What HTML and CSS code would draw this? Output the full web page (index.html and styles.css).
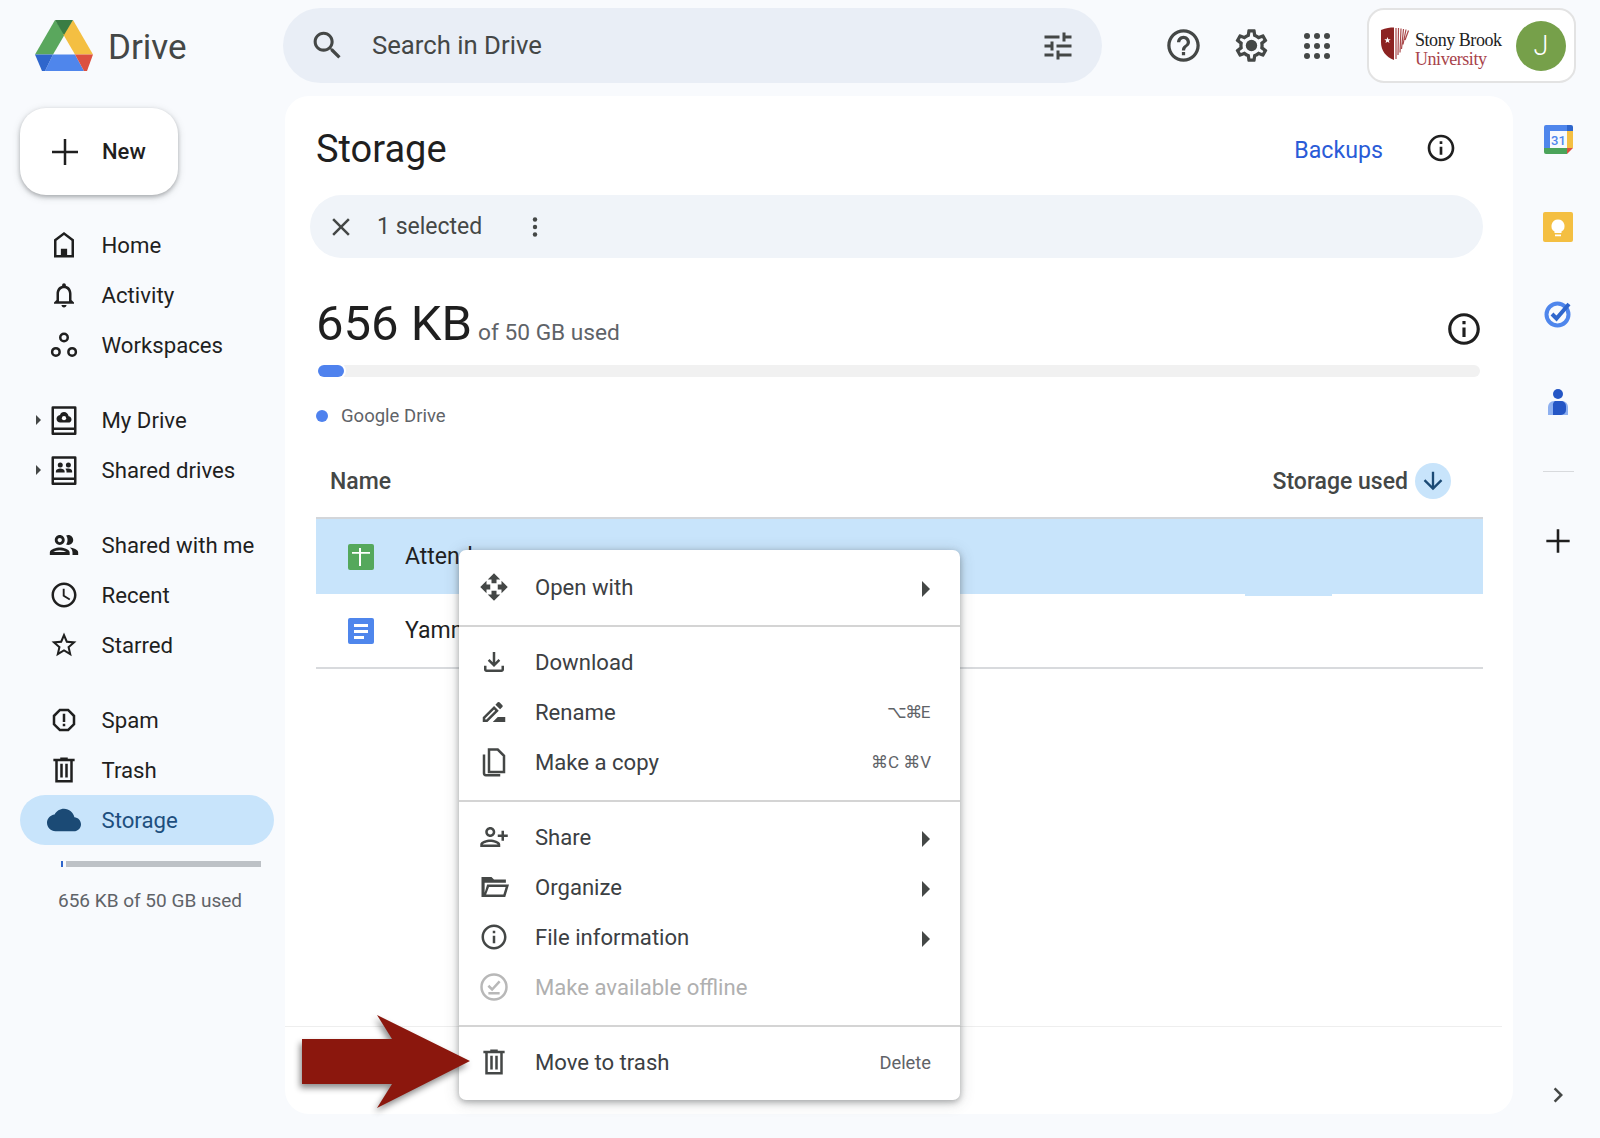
FILE: index.html
```html
<!DOCTYPE html>
<html lang="en">
<head>
  <meta charset="UTF-8" />
  <title>Storage - Google Drive</title>
  <link rel="stylesheet" href="styles.css">
</head>
<body>

  <!-- HEADER -->
  <header class="topbar">
    <div class="brand">
      <svg class="brand-logo" viewBox="0 0 60 54">
        <path fill="#5aa75d" d="M20 1 0 35.500h18L30 15z"/>
        <path fill="#f4bf42" d="M38 1 58 35.500H40L28 15z"/>
        <path fill="#3a7d44" d="M20 1h18L29 16z"/>
        <path fill="#4f86ec" d="M18 35.500h22l9 16.500H10z"/>
        <path fill="#2f66cc" d="M0 35.500h18L10 52H7z"/>
        <path fill="#dc5040" d="M40 35.500h18l-6 16.500h-3z"/>
      </svg>
      <span class="brand-name">Drive</span>
    </div>
    <div class="search">
      <svg class="icon search-icon" viewBox="0 0 24 24"><path d="M15.500 14h-.79l-.28-.27C15.410 12.590 16 11.110 16 9.500 16 5.910 13.090 3 9.500 3S3 5.910 3 9.500 5.910 16 9.500 16c1.610 0 3.090-.59 4.230-1.570l.27.28v.79l5 4.990L20.490 19l-4.990-5zm-6 0C7.010 14 5 11.990 5 9.500S7.010 5 9.500 5 14 7.010 14 9.500 11.990 14 9.500 14z"/></svg>
      <span class="search-text">Search in Drive</span>
      <svg class="icon tune-icon" viewBox="0 0 24 24"><path d="M3 17v2h6v-2H3zM3 5v2h10V5H3zm10 16v-2h8v-2h-8v-2h-2v6h2zM7 9v2H3v2h4v2h2V9H7zm14 4v-2H11v2h10zm-6-4h2V7h4V5h-4V3h-2v6z"/></svg>
    </div>
    <div class="top-actions">
      <svg class="icon help-icon" viewBox="0 0 24 24"><path d="M11 18h2v-2h-2v2zm1-16C6.480 2 2 6.480 2 12s4.480 10 10 10 10-4.480 10-10S17.520 2 12 2zm0 18c-4.410 0-8-3.590-8-8s3.590-8 8-8 8 3.590 8 8-3.590 8-8 8zm0-14c-2.210 0-4 1.790-4 4h2c0-1.100.9-2 2-2s2 .9 2 2c0 2-3 1.750-3 5h2c0-2.250 3-2.500 3-5 0-2.210-1.790-4-4-4z"/></svg>
      <svg class="icon gear-icon" viewBox="0 0 24 24"><path d="M19.430 12.980c.04-.32.07-.64.07-.98 0-.34-.03-.66-.07-.98l2.110-1.650c.19-.15.24-.42.12-.64l-2-3.460c-.09-.16-.26-.25-.44-.25-.06 0-.12.01-.17.03l-2.490 1c-.52-.4-1.080-.73-1.690-.98l-.38-2.650C14.460 2.180 14.250 2 14 2h-4c-.25 0-.46.18-.49.42l-.38 2.650c-.61.25-1.170.59-1.690.98l-2.490-1c-.06-.02-.12-.03-.18-.03-.17 0-.34.09-.43.25l-2 3.460c-.13.22-.07.49.12.64l2.110 1.650c-.04.32-.07.65-.07.98 0 .33.03.66.07.98l-2.110 1.650c-.19.15-.24.42-.12.64l2 3.460c.09.16.26.25.44.25.06 0 .12-.01.17-.03l2.490-1c.52.4 1.080.73 1.690.98l.38 2.650c.03.24.24.42.49.42h4c.25 0 .46-.18.49-.42l.38-2.650c.61-.25 1.170-.59 1.690-.98l2.490 1c.06.02.12.03.18.03.17 0 .34-.09.43-.25l2-3.460c.12-.22.07-.49-.12-.64l-2.110-1.650zm-1.980-1.710c.04.31.05.52.05.73 0 .21-.02.43-.05.73l-.14 1.130.89.7 1.080.84-.7 1.210-1.270-.51-1.040-.42-.9.68c-.43.32-.84.56-1.250.73l-1.060.43-.16 1.130-.2 1.350h-1.400l-.19-1.350-.16-1.130-1.060-.43c-.43-.18-.83-.41-1.230-.71l-.91-.7-1.060.43-1.270.51-.7-1.210 1.080-.84.89-.7-.14-1.130c-.03-.31-.05-.54-.05-.74s.02-.43.05-.73l.14-1.130-.89-.7-1.080-.84.7-1.210 1.270.51 1.040.42.9-.68c.43-.32.84-.56 1.250-.73l1.060-.43.16-1.130.2-1.350h1.390l.19 1.350.16 1.130 1.060.43c.43.18.83.41 1.230.71l.91.7 1.060-.43 1.270-.51.7 1.210-1.070.85-.89.7.14 1.130z"/><circle cx="12" cy="12" r="3.500"/></svg>
      <svg class="apps-icon" viewBox="0 0 26 26">
        <circle cx="3" cy="3" r="3"/><circle cx="13" cy="3" r="3"/><circle cx="23" cy="3" r="3"/>
        <circle cx="3" cy="13" r="3"/><circle cx="13" cy="13" r="3"/><circle cx="23" cy="13" r="3"/>
        <circle cx="3" cy="23" r="3"/><circle cx="13" cy="23" r="3"/><circle cx="23" cy="23" r="3"/>
      </svg>
    </div>
    <div class="account">
      <svg class="shield" viewBox="0 0 28 33">
        <path fill="#8c2322" d="M0 3C5 1 9 .5 13 .5V33C5 30 0 24 0 15z"/>
        <path fill="#fff" d="m6.500 10 .8 2.300h2.400l-1.900 1.500.7 2.300-2-1.400-2 1.400.7-2.300-1.900-1.500h2.400z"/>
        <path fill="none" stroke="#a9484a" stroke-width="1.200" d="M15 1v31M17.500 1 17 28M20 1.500l-1 24M22.500 2l-2 20M25 2.500l-3 15M27.500 3.500 24 13"/>
      </svg>
      <div class="school">
        <span class="school-top">Stony Brook</span>
        <span class="school-bottom">University</span>
      </div>
      <div class="avatar">J</div>
    </div>
  </header>

  <div class="layout">

    <!-- SIDEBAR -->
    <aside class="sidebar">
      <button class="new-btn">
        <svg class="new-plus" viewBox="0 0 28 28"><path d="M12.750 1h2.500v11.750H27v2.500H15.250V27h-2.500V15.250H1v-2.500h11.750z"/></svg>
        New
      </button>

      <nav class="nav-group">
        <a class="nav-row"><svg class="nav-icon" viewBox="0 0 24 24"><path d="M12 1.500 4 7.500V22h16V7.500zM18 20h-3.500v-5h-5v5H6V8.500l6-4.500 6 4.500z"/></svg>Home</a>
        <a class="nav-row"><svg class="nav-icon" viewBox="0 0 24 24"><path d="M12 22c1.100 0 2-.9 2-2h-4c0 1.100.9 2 2 2zm6-6v-5c0-3.070-1.630-5.640-4.500-6.320V4c0-.83-.67-1.500-1.500-1.500s-1.500.67-1.500 1.500v.68C7.640 5.360 6 7.920 6 11v5l-2 2v1h16v-1l-2-2zm-2 1H8v-6c0-2.480 1.510-4.500 4-4.500s4 2.020 4 4.500v6z"/></svg>Activity</a>
        <a class="nav-row"><svg class="nav-icon" viewBox="0 0 24 24"><g fill="none" stroke="#1f1f1f" stroke-width="2"><circle cx="12" cy="6" r="3"/><circle cx="5.500" cy="17.500" r="3"/><circle cx="18.500" cy="17.500" r="3"/></g></svg>Workspaces</a>
      </nav>

      <nav class="nav-group">
        <a class="nav-row has-caret"><svg class="nav-icon" viewBox="0 0 24 24"><path d="M3 1h18a1 1 0 0 1 1 1v21a1 1 0 0 1-1 1H3a1 1 0 0 1-1-1V2a1 1 0 0 1 1-1zm1 2v15h16V3zm0 17v2h16v-2z"/><path d="M12 5.500c-1.600 0-2.800 1-3.200 2.400C7.200 8.100 6 9.500 6 11c0 1.700 1.300 3 3 3h6.500c1.400 0 2.500-1.100 2.500-2.500 0-1.300-1-2.400-2.300-2.500-.4-2.100-1.800-3.500-3.700-3.500z"/><circle cx="12" cy="10.500" r="1.700" fill="#fff"/></svg>My Drive</a>
        <a class="nav-row has-caret"><svg class="nav-icon" viewBox="0 0 24 24"><path d="M3 1h18a1 1 0 0 1 1 1v21a1 1 0 0 1-1 1H3a1 1 0 0 1-1-1V2a1 1 0 0 1 1-1zm1 2v15h16V3zm0 17v2h16v-2z"/><circle cx="9" cy="8" r="2"/><circle cx="15.500" cy="8" r="2"/><path d="M5.500 14v-1c0-1.500 2-2.200 3.500-2.200s3.500.7 3.500 2.200v1zM14 14v-1c0-.9-.3-1.600-.9-2.100.7-.1 1.700-.1 2.400-.1 1.500 0 3 .7 3 2.200v1z"/></svg>Shared drives</a>
      </nav>

      <nav class="nav-group">
        <a class="nav-row"><svg class="nav-icon nav-icon-wide" viewBox="0 0 24 24"><path d="M9 13.750c-2.340 0-7 1.170-7 3.500V19h14v-1.750c0-2.330-4.660-3.500-7-3.500zM4.340 17c.84-.58 2.870-1.250 4.660-1.250s3.820.67 4.660 1.250H4.340zM9 12c1.930 0 3.500-1.570 3.500-3.500S10.930 5 9 5 5.500 6.570 5.500 8.500 7.070 12 9 12zm0-5c.83 0 1.500.67 1.500 1.500S9.830 10 9 10s-1.500-.67-1.500-1.500S8.170 7 9 7zm7.040 6.810c1.160.84 1.960 1.960 1.960 3.440V19h4v-1.750c0-2.020-3.500-3.170-5.960-3.440zM15 12c1.930 0 3.500-1.570 3.500-3.500S16.930 5 15 5c-.54 0-1.040.13-1.500.35.63.89 1 1.980 1 3.150s-.37 2.260-1 3.150c.46.22.96.35 1.500.35z"/></svg>Shared with me</a>
        <a class="nav-row"><svg class="nav-icon" viewBox="0 0 24 24"><path d="M11.990 2C6.470 2 2 6.480 2 12s4.470 10 9.990 10C17.520 22 22 17.520 22 12S17.520 2 11.990 2zM12 20c-4.420 0-8-3.580-8-8s3.580-8 8-8 8 3.580 8 8-3.580 8-8 8zm.5-13H11v6l5.250 3.150.75-1.230-4.500-2.670z"/></svg>Recent</a>
        <a class="nav-row"><svg class="nav-icon" viewBox="0 0 24 24"><path d="M22 9.240l-7.190-.62L12 2 9.190 8.630 2 9.240l5.460 4.730L5.820 21 12 17.270 18.180 21l-1.630-7.030L22 9.240zM12 15.400l-3.760 2.270 1-4.280-3.320-2.880 4.380-.38L12 6.100l1.710 4.040 4.380.38-3.320 2.880 1 4.280L12 15.400z"/></svg>Starred</a>
      </nav>

      <nav class="nav-group">
        <a class="nav-row"><svg class="nav-icon" viewBox="0 0 24 24"><path d="M15.730 3H8.270L3 8.270v7.460L8.270 21h7.460L21 15.730V8.270L15.730 3zM19 14.900 14.900 19H9.100L5 14.900V9.100L9.100 5h5.800L19 9.100v5.800zM11 7h2v6.500h-2zM11 15h2v2h-2z"/></svg>Spam</a>
        <a class="nav-row"><svg class="nav-icon" viewBox="0 0 24 24"><path d="M15 3V2H9v1H3.500v2H5v17h14V5h1.500V3zM17 20H7V5h10zM9 7h2v11H9zM13 7h2v11h-2z"/></svg>Trash</a>
        <a class="nav-row nav-row-active"><svg class="nav-icon nav-icon-wide" viewBox="0 0 24 24"><path d="M19.350 10.040C18.670 6.590 15.640 4 12 4 9.110 4 6.600 5.640 5.350 8.040 2.340 8.360 0 10.910 0 14c0 3.310 2.690 6 6 6h13c2.760 0 5-2.240 5-5 0-2.640-2.050-4.780-4.650-4.960z"/></svg>Storage</a>
      </nav>

      <div class="side-meter"><span class="side-meter-fill"></span><span class="side-meter-rest"></span></div>
      <div class="side-used">656 KB of 50 GB used</div>
    </aside>

    <!-- STORAGE PANEL -->
    <main class="panel">
      <div class="panel-head">
        <h1>Storage</h1>
        <a class="backups">Backups</a>
        <svg class="icon info-small" viewBox="0 0 24 24"><path d="M11 7h2v2h-2zm0 4h2v6h-2zm1-9C6.480 2 2 6.480 2 12s4.480 10 10 10 10-4.480 10-10S17.520 2 12 2zm0 18c-4.410 0-8-3.590-8-8s3.590-8 8-8 8 3.590 8 8-3.590 8-8 8z"/></svg>
      </div>

      <div class="select-bar">
        <svg class="icon close-icon" viewBox="0 0 24 24"><path d="M19 6.410 17.590 5 12 10.590 6.410 5 5 6.410 10.590 12 5 17.590 6.410 19 12 13.410 17.590 19 19 17.590 13.410 12z"/></svg>
        <span class="select-count">1 selected</span>
        <svg class="icon kebab" viewBox="0 0 24 24"><circle cx="12" cy="4.500" r="2.200"/><circle cx="12" cy="12" r="2.200"/><circle cx="12" cy="19.500" r="2.200"/></svg>
      </div>

      <div class="usage">
        <span class="usage-big">656 KB</span>
        <span class="usage-small">of 50 GB used</span>
        <svg class="icon info-large" viewBox="0 0 24 24"><path d="M11 7h2v2h-2zm0 4h2v6h-2zm1-9C6.480 2 2 6.480 2 12s4.480 10 10 10 10-4.480 10-10S17.520 2 12 2zm0 18c-4.410 0-8-3.590-8-8s3.590-8 8-8 8 3.590 8 8-3.590 8-8 8z"/></svg>
      </div>
      <div class="meter"><span class="meter-fill"></span></div>
      <div class="legend"><span class="legend-dot"></span>Google Drive</div>

      <div class="table-head">
        <span>Name</span>
        <span class="sort">Storage used
          <span class="sort-btn"><svg viewBox="0 0 24 24"><path d="M20 12l-1.410-1.410L13 16.170V4h-2v12.170l-5.580-5.590L4 12l8 8 8-8z"/></svg></span>
        </span>
      </div>
      <div class="file-row file-row-selected">
        <svg class="file-icon" viewBox="0 0 26 26"><rect width="26" height="26" rx="2" fill="#55a85c"/><path fill="#fff" d="M11 4h2v4h9v1.800h-9V22h-2V9.800H4V8h7z"/></svg>
        Attendance
      </div>
      <div class="file-row file-row-last">
        <svg class="file-icon" viewBox="0 0 26 26"><rect width="26" height="26" rx="2" fill="#4f86ec"/><path fill="#fff" d="M6 6h14v3H6zM6 12h14v3H6zM6 18h10v3H6z"/></svg>
        Yammer
      </div>

      <div class="panel-foot"></div>
    </main>

    <!-- SIDE APPS -->
    <aside class="rail">
      <svg class="rail-calendar" viewBox="0 0 29 29">
        <path fill="#4f86ec" d="M2 0h23v6H6v17H0V2a2 2 0 0 1 2-2z"/>
        <path fill="#2f66cc" d="M23 0h4a2 2 0 0 1 2 2v4h-6z"/>
        <path fill="#f4bf42" d="M23 6h6v17h-6z"/>
        <path fill="#4ba35a" d="M0 23h23v6H2a2 2 0 0 1-2-2z"/>
        <path fill="#dc5040" d="M23 23h6l-6 6z"/>
        <text class="rail-calendar-day" x="14.500" y="19.500" text-anchor="middle">31</text>
      </svg>
      <svg class="rail-keep" viewBox="0 0 30 30">
        <rect width="30" height="30" rx="2" fill="#f4bf42"/>
        <path fill="#fff" d="M15 7.500a6.500 6.500 0 0 0-3.500 12v1.500h7v-1.500a6.500 6.500 0 0 0-3.500-12zM12 22.500h6v1.800h-6z"/>
      </svg>
      <svg class="rail-tasks" viewBox="0 0 28 28">
        <circle cx="13.500" cy="14.500" r="11" fill="none" stroke="#4f86ec" stroke-width="4"/>
        <path fill="none" stroke="#2f66cc" stroke-width="4" d="m8 14 4.500 4.500L25 4"/>
      </svg>
      <svg class="rail-contacts" viewBox="0 0 24 26">
        <circle cx="12" cy="5" r="5" fill="#2556c5"/>
        <path fill="#8eb0f0" d="M8 12h8a6 6 0 0 1 6 6v8H2v-8a6 6 0 0 1 6-6z"/>
        <path fill="#2556c5" d="M9 12h6a5 5 0 0 1 5 5v4a5 5 0 0 1-5 5H7v-9a5 5 0 0 1 2-5z"/>
      </svg>
      <div class="rail-line"></div>
      <svg class="rail-plus" viewBox="0 0 24 24"><path d="M10.900 2h2.200v8.900H22v2.200h-8.900V22h-2.200v-8.900H2v-2.200h8.900z"/></svg>
      <svg class="rail-chevron" viewBox="0 0 24 24"><path d="M8.590 16.590 13.170 12 8.590 7.410 10 6l6 6-6 6z"/></svg>
    </aside>
  </div>

  <!-- CONTEXT MENU -->
  <div class="menu">
    <div class="menu-group">
      <div class="menu-item"><svg class="menu-icon" viewBox="0 0 24 24"><path d="M10 9h4V6h3l-5-5-5 5h3v3zm-1 1H6V7l-5 5 5 5v-3h3v-4zm14 2-5-5v3h-3v4h3v3l5-5zm-9 3h-4v3H7l5 5 5-5h-3v-3z"/></svg><span class="menu-label">Open with</span><span class="menu-more"></span></div>
    </div>
    <div class="menu-group">
      <div class="menu-item"><svg class="menu-icon" viewBox="0 0 24 24"><path d="M18 15v3H6v-3H4v3c0 1.100.9 2 2 2h12c1.100 0 2-.9 2-2v-3h-2zm-1-4-1.410-1.410L13 12.170V4h-2v8.170L8.410 9.590 7 11l5 5 5-5z"/></svg><span class="menu-label">Download</span></div>
      <div class="menu-item"><svg class="menu-icon" viewBox="0 0 24 24"><path d="m15 16-4 4h10v-4zM12.060 7.190 3 16.250V20h3.750l9.060-9.060-3.750-3.750zM5.920 18H5v-.92l7.060-7.060.92.92L5.920 18zM18.710 8.040c.39-.39.39-1.020 0-1.410l-2.340-2.340a.996.996 0 0 0-1.410 0l-1.830 1.830 3.750 3.750 1.830-1.830z"/></svg><span class="menu-label">Rename</span><span class="menu-key menu-key-sym menu-key-tight">⌥⌘E</span></div>
      <div class="menu-item"><svg class="menu-icon" viewBox="0 0 24 24"><path fill="none" stroke="#444746" stroke-width="2" d="M8 2h7l5 5v13H8zM4 6v15a1.500 1.500 0 0 0 1.500 1.500H17"/></svg><span class="menu-label">Make a copy</span><span class="menu-key menu-key-sym">⌘C ⌘V</span></div>
    </div>
    <div class="menu-group">
      <div class="menu-item"><svg class="menu-icon" viewBox="0 0 24 24"><path transform="translate(24 0) scale(-1 1)" d="M15 12c2.210 0 4-1.790 4-4s-1.790-4-4-4-4 1.790-4 4 1.790 4 4 4zm0-6c1.100 0 2 .9 2 2s-.9 2-2 2-2-.9-2-2 .9-2 2-2zm0 8c-2.670 0-8 1.340-8 4v2h16v-2c0-2.660-5.330-4-8-4zm-6 4c.22-.72 3.310-2 6-2 2.700 0 5.800 1.290 6 2H9zm-3-3v-3h3v-2H6V7H4v3H1v2h3v3h2z"/></svg><span class="menu-label">Share</span><span class="menu-more"></span></div>
      <div class="menu-item"><svg class="menu-icon" viewBox="0 0 24 24"><path fill-rule="evenodd" d="M2 4h8l2 2h9.500v2.500H4.500v8L6.500 10H24l-3 10H2zM8 12l-2.300 6h13.800l1.800-6z"/></svg><span class="menu-label">Organize</span><span class="menu-more"></span></div>
      <div class="menu-item"><svg class="menu-icon" viewBox="0 0 24 24"><path d="M11 7h2v2h-2zm0 4h2v6h-2zm1-9C6.480 2 2 6.480 2 12s4.480 10 10 10 10-4.480 10-10S17.520 2 12 2zm0 18c-4.410 0-8-3.590-8-8s3.590-8 8-8 8 3.590 8 8-3.590 8-8 8z"/></svg><span class="menu-label">File information</span><span class="menu-more"></span></div>
      <div class="menu-item menu-item-off"><svg class="menu-icon" viewBox="0 0 24 24"><g fill="none" stroke="#b8b8b8" stroke-width="2"><circle cx="12" cy="12" r="10"/><path d="m7.500 11 3 3 6-6.500M7.500 17h9"/></g></svg><span class="menu-label">Make available offline</span></div>
    </div>
    <div class="menu-group">
      <div class="menu-item"><svg class="menu-icon" viewBox="0 0 24 24"><path d="M15 3V2H9v1H3.500v2H5v17h14V5h1.500V3zM17 20H7V5h10zM9 7h2v11H9zM13 7h2v11h-2z"/></svg><span class="menu-label">Move to trash</span><span class="menu-key">Delete</span></div>
    </div>
  </div>

  <!-- RED ARROW -->
  <svg class="callout" viewBox="0 0 176 101">
    <path fill="#8b170d" d="M75 0 168 46 75 93 90 69H0V24H90z"/>
  </svg>

</body>
</html>
```

FILE: styles.css
```css
/* RESET */
* {
  margin: 0;
  padding: 0;
  box-sizing: border-box;
}

html, body {
  width: 100%;
  height: 100%;
  overflow: hidden;
}

body {
  position: relative;
  background: #f8fafd;
  color: #1f1f1f;
  font-family: Roboto, "DejaVu Sans", sans-serif;
  font-size: 22.200px;
}

.icon {
  fill: #444746;
  flex: none;
}

/* HEADER */
.topbar {
  display: flex;
  align-items: center;
  height: 96px;
  padding: 8px 0 13px 0;
}

.brand {
  display: flex;
  align-items: center;
  width: 283px;
  padding-left: 35px;
  gap: 13px;
}

.brand-logo {
  width: 60px;
  height: 54px;
}

.brand-name {
  margin-top: 3px;
  font-size: 35px;
  color: #444746;
}

.search {
  display: flex;
  align-items: center;
  width: 819px;
  height: 75px;
  padding: 0 26px 0 26px;
  border-radius: 38px;
  background: #e9eef6;
}

.search-icon {
  width: 37px;
  height: 37px;
}

.search-text {
  margin: -2px 0 0 26px;
  font-size: 25.700px;
  color: #444746;
}

.tune-icon {
  width: 36px;
  height: 36px;
  margin-left: auto;
}

.top-actions {
  display: flex;
  align-items: center;
  margin-left: 62px;
}

.help-icon {
  width: 39px;
  height: 39px;
}

.gear-icon {
  width: 39px;
  height: 39px;
  margin-left: 29px;
}

.apps-icon {
  width: 26px;
  height: 26px;
  margin-left: 33px;
  fill: #444746;
}

.account {
  display: flex;
  align-items: center;
  width: 209px;
  height: 75px;
  margin-left: 37px;
  padding-left: 12px;
  background: #fff;
  border: 2px solid #e3e3e3;
  border-radius: 17px;
}

.shield {
  width: 28px;
  height: 33px;
  margin-top: -5px;
  flex: none;
}

.school {
  display: flex;
  flex-direction: column;
  margin: 8px 0 0 6px;
  font-family: "Liberation Serif", serif;
  font-size: 18px;
  letter-spacing: -0.450px;
  line-height: 19px;
  white-space: nowrap;
}

.school-top {
  color: #222;
}

.school-bottom {
  color: #a8434a;
}

.avatar {
  display: flex;
  align-items: center;
  justify-content: center;
  width: 50px;
  height: 50px;
  margin-left: auto;
  margin-right: 8px;
  border-radius: 50%;
  background: #76a04a;
  color: #fff;
  font-size: 27px;
  font-weight: 300;
}

/* MAIN LAYOUT */
.layout {
  display: flex;
  height: 1042px;
}

/* SIDEBAR */
.sidebar {
  width: 285px;
  padding: 12px 0 0 20px;
  flex: none;
}

.new-btn {
  display: flex;
  align-items: center;
  width: 158px;
  height: 87px;
  padding-left: 31px;
  gap: 23px;
  border: none;
  border-radius: 26px;
  background: #fff;
  color: #1f1f1f;
  font-family: inherit;
  font-size: 22px;
  font-weight: 500;
  box-shadow: 0 2px 4px rgba(60,64,67,0.35), 0 2px 8px rgba(60,64,67,0.15);
}

.new-plus {
  width: 28px;
  height: 28px;
  fill: #1f1f1f;
}

.nav-group {
  margin-top: 25px;
  width: 254px;
}

.nav-row {
  position: relative;
  display: flex;
  align-items: center;
  height: 50px;
  padding-left: 29px;
  white-space: nowrap;
}

.nav-icon {
  width: 30px;
  height: 30px;
  margin-right: 22.500px;
  fill: #1f1f1f;
  flex: none;
}

.nav-icon-wide {
  width: 34px;
  height: 34px;
  margin: 0 20.500px 0 -2px;
}

.has-caret::before {
  content: '';
  position: absolute;
  left: 16px;
  top: 20px;
  border-left: 5px solid #444746;
  border-top: 5px solid transparent;
  border-bottom: 5px solid transparent;
}

.nav-row-active {
  background: #c8e4fb;
  border-radius: 25px;
  color: #1d4f7e;
}

.nav-row-active .nav-icon {
  fill: #1b4a75;
}

.side-meter {
  display: flex;
  width: 200px;
  height: 6px;
  margin: 16px 0 0 41px;
  gap: 3px;
}

.side-meter-fill {
  width: 2px;
  background: #2f66cc;
}

.side-meter-rest {
  flex: 1;
  background: #bdc1c6;
}

.side-used {
  margin: 22px 0 0 38px;
  font-size: 19px;
  color: #5f6368;
  white-space: nowrap;
}

/* STORAGE PANEL */
.panel {
  display: flex;
  flex-direction: column;
  width: 1228px;
  height: 1018px;
  padding: 0 30px 0 31px;
  background: #fff;
  border-radius: 24px;
  flex: none;
}

.panel-head {
  display: flex;
  align-items: center;
  height: 99px;
  padding-top: 6px;
  flex: none;
}

.panel-head h1 {
  font-size: 38px;
  font-weight: 400;
}

.backups {
  margin-left: auto;
  margin-top: 3px;
  color: #2a5bd7;
  font-size: 23.200px;
}

.info-small {
  width: 32px;
  height: 32px;
  margin: -1px 26px 0 42px;
  fill: #1f1f1f;
}

.select-bar {
  display: flex;
  align-items: center;
  height: 63px;
  margin-left: -6px;
  padding-left: 16px;
  background: #f0f4f9;
  border-radius: 32px;
  flex: none;
}

.close-icon {
  width: 30px;
  height: 30px;
}

.select-count {
  margin-left: 21px;
  font-size: 23px;
  color: #444746;
}

.kebab {
  width: 24px;
  height: 24px;
  margin-left: 41px;
}

.usage {
  display: flex;
  align-items: baseline;
  height: 107px;
  padding-top: 37px;
  flex: none;
}

.usage-big {
  font-size: 49px;
}

.usage-small {
  margin-left: 6px;
  font-size: 22.700px;
  color: #5f6368;
}

.info-large {
  width: 38px;
  height: 38px;
  margin: 0 0 2px auto;
  align-self: center;
  fill: #1f1f1f;
}

.meter {
  height: 12px;
  margin: 0 3px 0 2px;
  background: #f1f1f1;
  border-radius: 6px;
  flex: none;
}

.meter-fill {
  display: block;
  width: 26px;
  height: 12px;
  background: #4f82ee;
  border-radius: 6px;
  box-shadow: 0 0 0 2px #fff;
}

.legend {
  display: flex;
  align-items: center;
  height: 76px;
  padding-top: 2px;
  gap: 13px;
  font-size: 18.500px;
  color: #5f6368;
  flex: none;
}

.legend-dot {
  width: 12px;
  height: 12px;
  border-radius: 50%;
  background: #4f82ee;
}

.table-head {
  display: flex;
  align-items: center;
  justify-content: space-between;
  height: 66px;
  padding: 0 32px 8px 14px;
  border-bottom: 2px solid #d3d6da;
  font-size: 23px;
  font-weight: 500;
  color: #444746;
  flex: none;
}

.sort {
  display: flex;
  align-items: center;
  gap: 7px;
}

.sort-btn {
  display: flex;
  align-items: center;
  justify-content: center;
  width: 36px;
  height: 36px;
  border-radius: 50%;
  background: #c8e4fb;
}

.sort-btn svg {
  width: 28px;
  height: 28px;
  fill: #1b4a75;
}

.file-row {
  position: relative;
  display: flex;
  align-items: center;
  height: 75px;
  padding-left: 32px;
  gap: 31px;
  font-size: 23px;
  flex: none;
}

.file-row-selected {
  background: #c8e4fb;
}

.file-row-selected::after {
  content: '';
  position: absolute;
  left: 929px;
  bottom: -2px;
  width: 87px;
  height: 2px;
  background: #c8e4fb;
}

.file-row-last {
  border-bottom: 2px solid #d8dadd;
}

.file-icon {
  width: 26px;
  height: 26px;
  flex: none;
}

.panel-foot {
  height: 88px;
  margin-top: auto;
  margin-right: -19px;
  margin-left: -31px;
  border-top: 1px solid #eee;
  flex: none;
}

/* SIDE APPS */
.rail {
  display: flex;
  flex-direction: column;
  align-items: center;
  width: 87px;
  padding-left: 3px;
  flex: none;
}

.rail-calendar {
  width: 29px;
  height: 29px;
  margin-top: 29px;
}

.rail-calendar-day {
  fill: #4f86ec;
  font-family: Roboto, sans-serif;
  font-size: 13px;
  font-weight: 500;
}

.rail-keep {
  width: 30px;
  height: 30px;
  margin-top: 58px;
}

.rail-tasks {
  width: 28px;
  height: 28px;
  margin-top: 58px;
}

.rail-contacts {
  width: 24px;
  height: 26px;
  margin-top: 61px;
}

.rail-line {
  width: 31px;
  height: 1px;
  margin-top: 56px;
  background: #d8dadd;
}

.rail-plus {
  width: 28px;
  height: 28px;
  margin-top: 55px;
  fill: #1f1f1f;
}

.rail-chevron {
  width: 30px;
  height: 30px;
  margin-top: auto;
  margin-bottom: 28px;
  fill: #444746;
}

/* CONTEXT MENU */
.menu {
  position: absolute;
  left: 459px;
  top: 550px;
  width: 501px;
  height: 550px;
  padding: 12px 0 13px;
  background: #fff;
  border-radius: 7px;
  box-shadow: 0 2px 6px rgba(60,64,67,0.4), 0 2px 16px rgba(60,64,67,0.2);
  font-size: 22.100px;
}

.menu-group {
  padding: 0 0 13px;
  border-bottom: 2px solid #d4d4d4;
  margin-bottom: 10px;
}

.menu-group:last-child {
  border-bottom: none;
  margin-bottom: 0;
  padding-bottom: 0;
}

.menu-item {
  display: flex;
  align-items: center;
  height: 50px;
  padding: 0 29px 0 20px;
  color: #3c4043;
}

.menu-icon {
  width: 30px;
  height: 30px;
  margin-right: 26px;
  fill: #444746;
  flex: none;
}

.menu-key {
  margin-left: auto;
  font-size: 18.300px;
  color: #5f6368;
}

.menu-key-sym {
  font-size: 17px;
}

.menu-key-tight {
  margin-right: 2px;
  letter-spacing: -1.500px;
}

.menu-more {
  margin-left: auto;
  margin-top: 4px;
  margin-right: 1px;
  border-left: 8px solid #444746;
  border-top: 8px solid transparent;
  border-bottom: 8px solid transparent;
}

.menu-item-off {
  color: #b0b0b0;
}

/* RED ARROW */
.callout {
  position: absolute;
  left: 302px;
  top: 1015px;
  width: 176px;
  height: 101px;
  filter: drop-shadow(-2px 4px 3px rgba(0,0,0,0.45));
}
```
